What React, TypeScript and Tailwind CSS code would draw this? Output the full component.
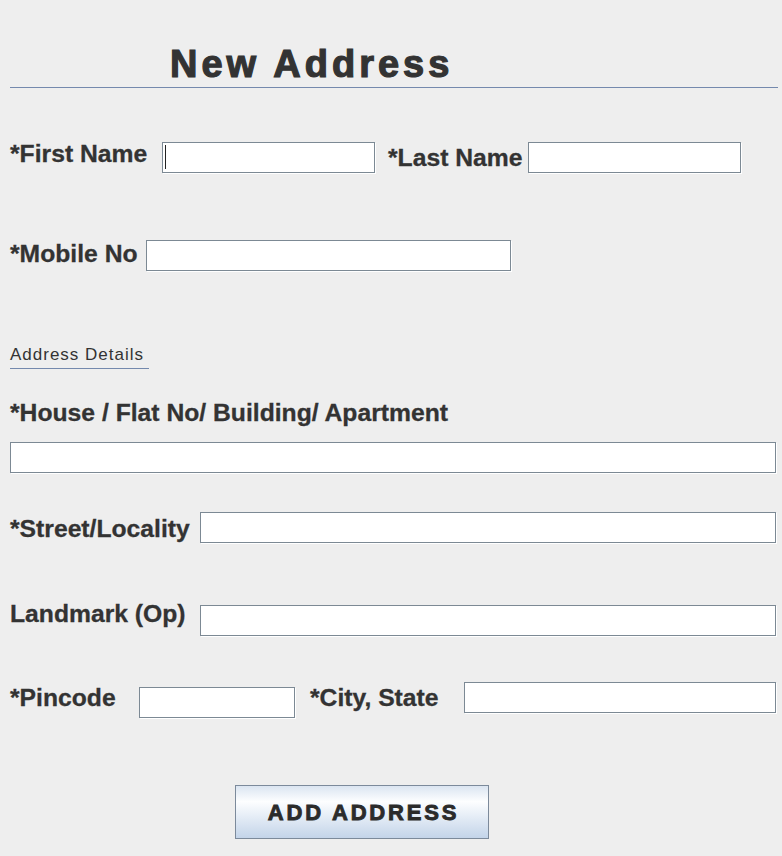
import React from "react";

function Field({ className = "", caret = false }: { className?: string; caret?: boolean }) {
  return (
    <div className={`h-[31px] shrink-0 border border-[#7c8994] bg-white shadow-[1px_1px_0_#ffffff] ${className}`}>
      {caret && <div className="ml-[2px] mt-[2px] h-[24px] w-px bg-[#222]" />}
    </div>
  );
}

function Label({ children, className = "" }: { children: React.ReactNode; className?: string }) {
  return (
    <div className={`h-[31px] shrink-0 whitespace-nowrap text-[24.7px] font-bold leading-[31px] [-webkit-text-stroke:0.3px_#333333] ${className}`}>
      {children}
    </div>
  );
}

export default function App() {
  return (
    <div className="h-[856px] w-[782px] overflow-hidden bg-[#eeeeee] font-['Liberation_Sans',Arial,sans-serif] text-[#333333]">
      <h1 className="ml-[170px] mt-[45px] h-[38px] text-[38px] font-bold leading-[38px] tracking-[4px] [-webkit-text-stroke:1.2px_#333333]">
        New Address
      </h1>
      <div className="ml-[10px] mt-[4px] h-px w-[768px] bg-[#7489ad]" />

      {/* name row */}
      <div className="mt-[50px] flex items-start">
        <Label className="ml-[10px] w-[152px]">*First Name</Label>
        <Field className="mt-[4px] w-[213px]" caret />
        <Label className="ml-[13px] mt-[4px] w-[140px]">*Last Name</Label>
        <Field className="mt-[4px] w-[213px]" />
      </div>

      <div className="mt-[65px] flex items-start">
        <Label className="ml-[10px] w-[136px]">*Mobile No</Label>
        <Field className="mt-[2px] w-[365px]" />
      </div>

      <div className="ml-[10px] mt-[74px] w-[139px] border-b border-[#7489ad] pb-[3px] text-[17px] leading-[20px] tracking-[1px]">
        Address Details
      </div>

      <Label className="ml-[10px] mt-[28px]">*House / Flat No/ Building/ Apartment</Label>
      <Field className="ml-[10px] mt-[14px] w-[766px]" />

      <div className="mt-[39px] flex items-start">
        <Label className="ml-[10px] mt-px w-[190px]">*Street/Locality</Label>
        <Field className="w-[576px]" />
      </div>

      <div className="mt-[54px] flex items-start">
        <Label className="ml-[10px] w-[190px]">Landmark (Op)</Label>
        <Field className="mt-[7px] w-[576px]" />
      </div>

      <div className="mt-[46px] flex items-start">
        <Label className="ml-[10px] w-[129px]">*Pincode</Label>
        <Field className="mt-[5px] w-[156px]" />
        <Label className="ml-[15px] w-[154px]">*City, State</Label>
        <Field className="w-[312px]" />
      </div>

      <button className="ml-[235px] mt-[67px] flex h-[54px] w-[254px] items-center justify-center border border-[#7c8a9b] bg-linear-to-b from-[#dbe5f1] via-[#fdfeff] via-30% to-[#c3d4e9] pl-[3px] pt-[2px] text-[22px] font-bold leading-[22px] tracking-[2.8px] text-[#2b2b2b] [-webkit-text-stroke:0.9px_#2b2b2b]">
        ADD ADDRESS
      </button>
    </div>
  );
}
